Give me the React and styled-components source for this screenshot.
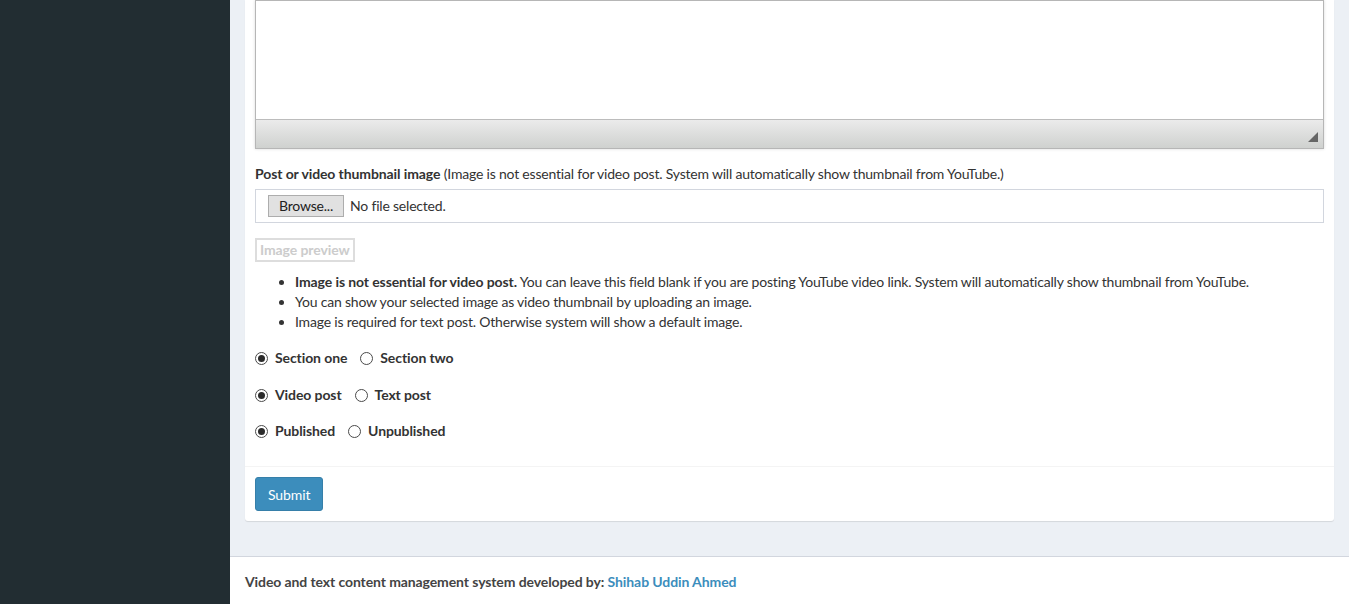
import React from "react";
import styled, { createGlobalStyle } from "styled-components";

const GlobalStyle = createGlobalStyle`
  html, body {
    margin: 0;
    padding: 0;
    height: 100%;
  }
  body {
    font-family: "Lato", "Liberation Sans", sans-serif;
    font-size: 14px;
    line-height: 20px;
    letter-spacing: -0.2px;
    color: #333;
    background: #ecf0f5;
    overflow: hidden;
  }
  b { letter-spacing: -0.1px; }
  * { box-sizing: border-box; }
`;

const Layout = styled.div`
  display: grid;
  grid-template-columns: 230px 1fr;
  height: 604px;
`;

const Sidebar = styled.aside`
  background: #222d32;
`;

const Main = styled.div`
  display: flex;
  flex-direction: column;
  background: #ecf0f5;
`;

const Content = styled.section`
  flex-grow: 1;
  padding: 0 15px 15px;
`;

const Box = styled.div`
  background: #fff;
  border-radius: 0 0 3px 3px;
  box-shadow: 0 1px 1px rgba(0, 0, 0, 0.1);
  margin-bottom: 20px;
`;

const BoxBody = styled.div`
  padding: 0 10px 25px;
`;

const BoxFooter = styled.div`
  border-top: 1px solid #f4f4f4;
  padding: 10px;
`;

const Editor = styled.div`
  border: 1px solid #b6b6b6;
  box-shadow: 0 0 3px rgba(0, 0, 0, 0.15);
  margin-bottom: 15px;
`;

const EditorArea = styled.div`
  height: 118px;
  background: #fff;
`;

const EditorBottom = styled.div`
  height: 29px;
  border-top: 1px solid #bcbcbc;
  background: linear-gradient(to bottom, #ebebeb, #cfd1cf);
  display: flex;
  justify-content: flex-end;
  align-items: flex-end;
  padding: 0 5px 6px 0;
`;

const Grip = styled.div`
  width: 0;
  height: 0;
  border-left: 10px solid transparent;
  border-bottom: 10px solid #666;
`;

const Label = styled.div`
  margin-bottom: 5px;
  b { font-weight: 700; }
`;

const FileBox = styled.div`
  height: 34px;
  border: 1px solid #d2d6de;
  display: flex;
  align-items: center;
  padding: 0 12px;
  gap: 6px;
  margin-bottom: 15px;
`;

const BrowseButton = styled.button`
  font-family: inherit;
  font-size: 14px;
  letter-spacing: -0.2px;
  color: #222;
  background: #e1e1e1;
  border: 1px solid #adadad;
  height: 22px;
  padding: 0 10px;
  line-height: 18px;
`;

const Preview = styled.div`
  display: inline-block;
  vertical-align: top;
  border: 2px solid #ddd;
  color: #ccc;
  font-weight: 700;
  letter-spacing: -0.1px;
  padding: 0 3px;
  line-height: 20px;
`;

const Notes = styled.ul`
  margin: 10px 0 16px;
  padding-left: 40px;
  li { line-height: 20px; }
`;

const RadioRow = styled.div`
  display: flex;
  align-items: center;
  gap: 13px;
  height: 20px;
  margin-bottom: ${p => p.$gap ?? 16}px;
`;

const RadioLabel = styled.label`
  display: flex;
  align-items: center;
  gap: 7px;
  font-weight: 700;
  letter-spacing: -0.1px;
`;

const Radio = styled.input`
  appearance: none;
  margin: 0;
  width: 13px;
  height: 13px;
  border: 1px solid #4a4a4a;
  border-radius: 50%;
  background: #fff;
  display: grid;
  place-items: center;
  &:checked::after {
    content: "";
    width: 7px;
    height: 7px;
    border-radius: 50%;
    background: #2b2b2b;
  }
`;

const SubmitButton = styled.button`
  font-family: inherit;
  font-size: 14px;
  letter-spacing: -0.1px;
  color: #fff;
  background: #3c8dbc;
  border: 1px solid #367fa9;
  border-radius: 3px;
  height: 34px;
  padding: 0 12px;
`;

const Footer = styled.footer`
  background: #fff;
  border-top: 1px solid #d2d6de;
  padding: 15px;
  font-weight: 700;
  letter-spacing: -0.1px;
  color: #444;
  a {
    color: #3c8dbc;
    text-decoration: none;
  }
`;

const RadioGroup = ({ name, options, gap }) => (
  <RadioRow $gap={gap}>
    {options.map((opt, i) => (
      <RadioLabel key={opt}>
        <Radio type="radio" name={name} defaultChecked={i === 0} />
        {opt}
      </RadioLabel>
    ))}
  </RadioRow>
);

export default function App() {
  return (
    <>
      <GlobalStyle />
      <Layout>
        <Sidebar />
        <Main>
          <Content>
            <Box>
              <BoxBody>
                <Editor>
                  <EditorArea />
                  <EditorBottom>
                    <Grip />
                  </EditorBottom>
                </Editor>
                <Label>
                  <b>Post or video thumbnail image</b> (Image is not essential for video post. System will automatically show thumbnail from YouTube.)
                </Label>
                <FileBox>
                  <BrowseButton>Browse...</BrowseButton>
                  <span>No file selected.</span>
                </FileBox>
                <Preview>Image preview</Preview>
                <Notes>
                  <li><b>Image is not essential for video post.</b> You can leave this field blank if you are posting YouTube video link. System will automatically show thumbnail from YouTube.</li>
                  <li>You can show your selected image as video thumbnail by uploading an image.</li>
                  <li>Image is required for text post. Otherwise system will show a default image.</li>
                </Notes>
                <RadioGroup name="section" options={["Section one", "Section two"]} gap={17} />
                <RadioGroup name="type" options={["Video post", "Text post"]} gap={16} />
                <RadioGroup name="status" options={["Published", "Unpublished"]} gap={0} />
              </BoxBody>
              <BoxFooter>
                <SubmitButton>Submit</SubmitButton>
              </BoxFooter>
            </Box>
          </Content>
          <Footer>
            Video and text content management system developed by: <a href="#">Shihab Uddin Ahmed</a>
          </Footer>
        </Main>
      </Layout>
    </>
  );
}
